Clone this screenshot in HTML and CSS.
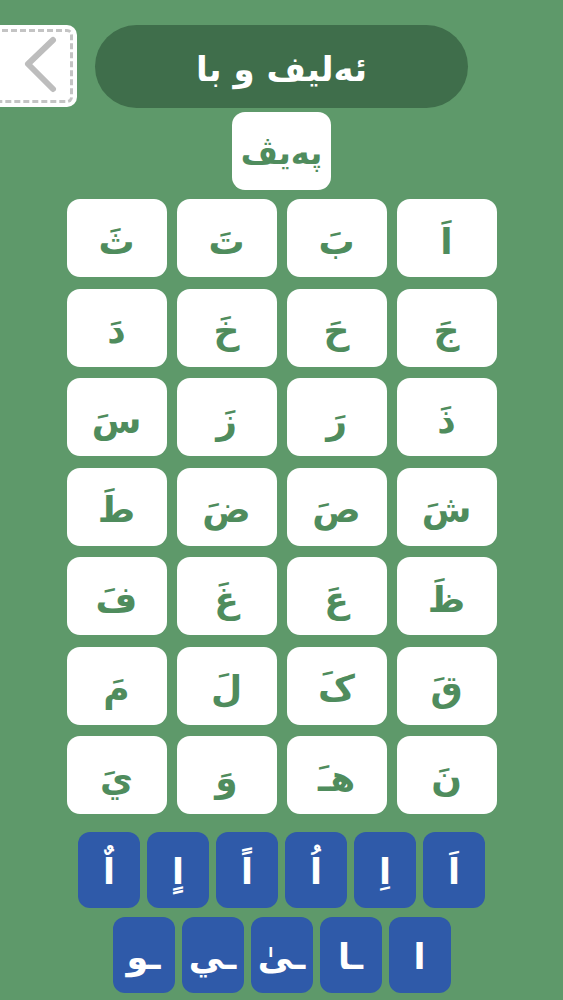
FILE: index.html
```html
<!DOCTYPE html>
<html lang="ckb">
<head>
<meta charset="utf-8">
<link rel="stylesheet" href="styles.css">
</head>
<body>
<div class="page">
  <header class="header">
    <div class="back">
      <svg class="chev" width="77" height="82" viewBox="0 0 77 82">
        <polyline points="53,15 28,39 53,64" fill="none" stroke="#bdbdbd" stroke-width="6" stroke-linecap="round" stroke-linejoin="round"/>
      </svg>
    </div>
    <div class="title">ئەلیف و با</div>
  </header>
  <div class="word-wrap"><div class="word">پەیڤ</div></div>
  <div class="grid">
    <div class="cell">اَ</div><div class="cell">بَ</div><div class="cell">تَ</div><div class="cell">ثَ</div>
    <div class="cell">جَ</div><div class="cell">حَ</div><div class="cell">خَ</div><div class="cell">دَ</div>
    <div class="cell">ذَ</div><div class="cell">رَ</div><div class="cell">زَ</div><div class="cell">سَ</div>
    <div class="cell">شَ</div><div class="cell">صَ</div><div class="cell">ضَ</div><div class="cell">طَ</div>
    <div class="cell">ظَ</div><div class="cell">عَ</div><div class="cell">غَ</div><div class="cell">فَ</div>
    <div class="cell">قَ</div><div class="cell">کَ</div><div class="cell">لَ</div><div class="cell">مَ</div>
    <div class="cell">نَ</div><div class="cell">هـَ</div><div class="cell">وَ</div><div class="cell">يَ</div>
  </div>
  <div class="keys">
    <div class="key-row">
      <div class="key">اَ</div><div class="key">اِ</div><div class="key">اُ</div><div class="key">اً</div><div class="key">اٍ</div><div class="key">اٌ</div>
    </div>
    <div class="key-row">
      <div class="key">ا</div><div class="key">ـا</div><div class="key">ـىٰ</div><div class="key">ـي</div><div class="key">ـو</div>
    </div>
  </div>
</div>
</body>
</html>
```
FILE: styles.css
```css
html, body {
  margin: 0;
  padding: 0;
  background: #5e996a;
}
body {
  font-family: "DejaVu Sans", "Noto Sans", sans-serif;
  width: 563px;
  height: 1000px;
  overflow: hidden;
}
.page {
  display: flex;
  flex-direction: column;
  padding-top: 25px;
}
.header {
  display: flex;
  align-items: flex-start;
  gap: 18px;
  height: 83px;
}
.back {
  width: 77px;
  height: 82px;
  background: #ffffff;
  border-radius: 0 10px 10px 0;
  position: relative;
  flex: none;
  overflow: hidden;
}
.back::before {
  content: "";
  position: absolute;
  left: -8px;
  top: 4px;
  right: 4px;
  bottom: 4px;
  border: 3px dashed #c4c4c4;
  border-radius: 0 6px 6px 0;
}
.chev {
  position: absolute;
  left: 0;
  top: 0;
}
.title {
  width: 373px;
  height: 83px;
  border-radius: 42px;
  background: #3f6e4b;
  color: #ffffff;
  font-size: 34px;
  font-weight: bold;
  display: flex;
  align-items: center;
  justify-content: center;
  direction: rtl;
  padding-top: 4px;
  box-sizing: border-box;
}
.word-wrap {
  display: flex;
  justify-content: center;
  margin-top: 4px;
}
.word {
  width: 99px;
  height: 78px;
  background: #ffffff;
  border-radius: 13px;
  color: #4f8c5d;
  font-size: 32px;
  font-weight: bold;
  display: flex;
  align-items: center;
  justify-content: center;
  direction: rtl;
  padding-top: 4px;
  box-sizing: border-box;
}
.grid {
  direction: rtl;
  display: grid;
  grid-template-columns: repeat(4, 100px);
  grid-auto-rows: 78px;
  column-gap: 10px;
  row-gap: 11.5px;
  justify-content: center;
  margin-top: 9px;
}
.cell {
  background: #ffffff;
  border-radius: 13px;
  color: #4f8c5d;
  font-size: 36px;
  font-weight: bold;
  display: flex;
  align-items: center;
  justify-content: center;
  padding-top: 6px;
  box-sizing: border-box;
}
.keys {
  display: flex;
  flex-direction: column;
  align-items: center;
  gap: 9px;
  margin-top: 18px;
}
.key-row {
  direction: rtl;
  display: flex;
  gap: 7px;
}
.key {
  width: 62px;
  height: 76px;
  background: #2f5aa9;
  border-radius: 12px;
  color: #ffffff;
  font-size: 35px;
  font-weight: bold;
  display: flex;
  align-items: center;
  justify-content: center;
  padding-top: 4px;
  box-sizing: border-box;
}
```
